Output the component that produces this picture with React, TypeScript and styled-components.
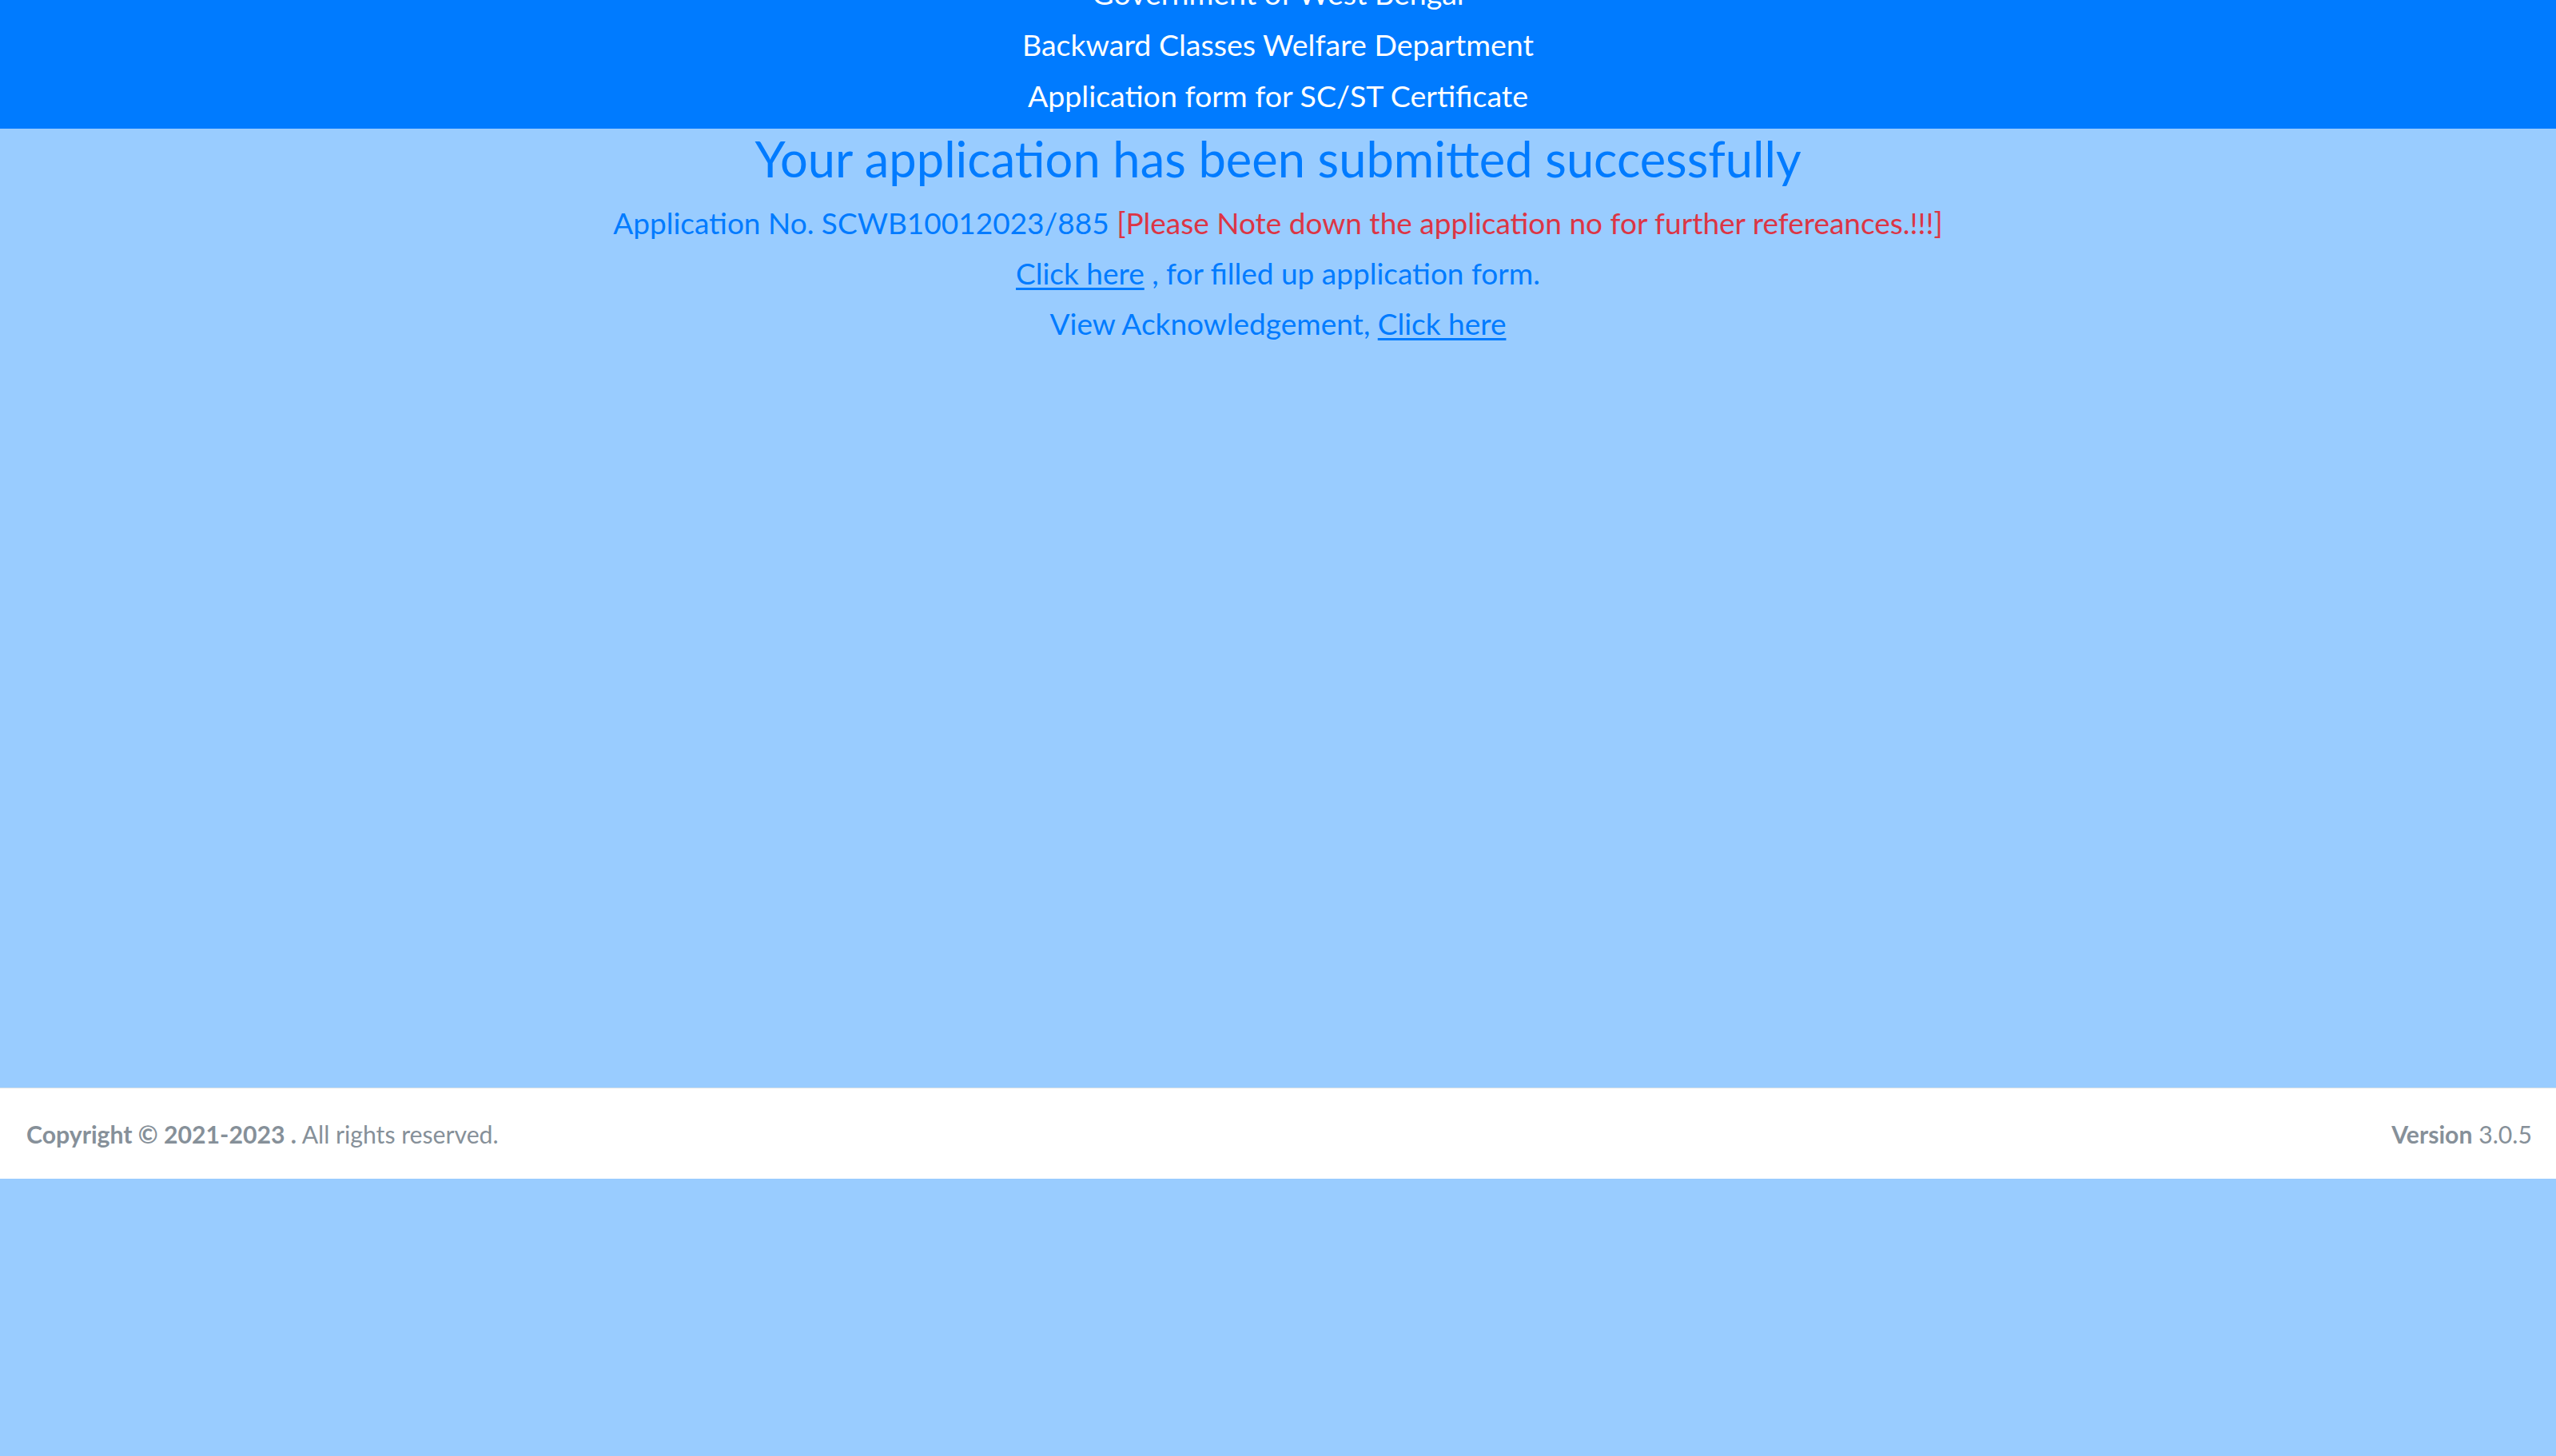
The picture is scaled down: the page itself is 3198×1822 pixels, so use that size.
import React from "react";
import styled, { createGlobalStyle } from "styled-components";

const GlobalStyle = createGlobalStyle`
  html, body {
    margin: 0;
    padding: 0;
    background: #99ccff;
  }
  body {
    font-family: Lato, "Noto Sans", "Liberation Sans", sans-serif;
    color: #212529;
  }
  * { box-sizing: border-box; }
`;

const Page = styled.div`
  display: flex;
  flex-direction: column;
`;

const Header = styled.header`
  background: #007bff;
  color: #ffffff;
  text-align: center;
  margin-top: -40px;
  padding-bottom: 9px;
`;

const HeaderLine = styled.div`
  font-size: 37.5px;
  line-height: 64px;
`;

const Main = styled.main`
  height: 1200px;
  display: flex;
  flex-direction: column;
  align-items: center;
  text-align: center;
  color: #007bff;
`;

const Title = styled.h2`
  margin: 4px 0 0;
  font-size: 61.4px;
  font-weight: 400;
  line-height: 1.1;
`;

const InfoList = styled.div`
  margin-top: 14px;
  display: flex;
  flex-direction: column;
  align-items: center;
`;

const InfoLine = styled.div`
  font-size: 37px;
  line-height: 63px;
`;

const Note = styled.span<{ $tone?: "danger" }>`
  color: ${(p) => (p.$tone === "danger" ? "#dc3545" : "#007bff")};
`;

const Link = styled.a`
  color: #007bff;
  text-decoration: underline;
  text-decoration-thickness: 3px;
  text-underline-offset: 4px;
  cursor: pointer;
`;

const Footer = styled.footer`
  height: 114px;
  background: #ffffff;
  border-top: 1px solid #dee2e6;
  display: flex;
  align-items: center;
  justify-content: space-between;
  padding: 0 30px 0 33px;
  color: #869099;
  font-size: 30.2px;
`;

const Strong = styled.strong`
  font-weight: 700;
`;

export default function App() {
  return (
    <Page>
      <GlobalStyle />
      <Header>
        <HeaderLine>Government of West Bengal</HeaderLine>
        <HeaderLine>Backward Classes Welfare Department</HeaderLine>
        <HeaderLine>Application form for SC/ST Certificate</HeaderLine>
      </Header>
      <Main>
        <Title>Your application has been submitted successfully</Title>
        <InfoList>
          <InfoLine>
            <Note>Application No. SCWB10012023/885</Note>{" "}
            <Note $tone="danger">
              [Please Note down the application no for further refereances.!!!]
            </Note>
          </InfoLine>
          <InfoLine>
            <Link href="#">Click here</Link> , for filled up application form.
          </InfoLine>
          <InfoLine>
            View Acknowledgement, <Link href="#">Click here</Link>
          </InfoLine>
        </InfoList>
      </Main>
      <Footer>
        <span>
          <Strong>Copyright © 2021-2023 .</Strong> All rights reserved.
        </span>
        <span>
          <Strong>Version</Strong> 3.0.5
        </span>
      </Footer>
    </Page>
  );
}
